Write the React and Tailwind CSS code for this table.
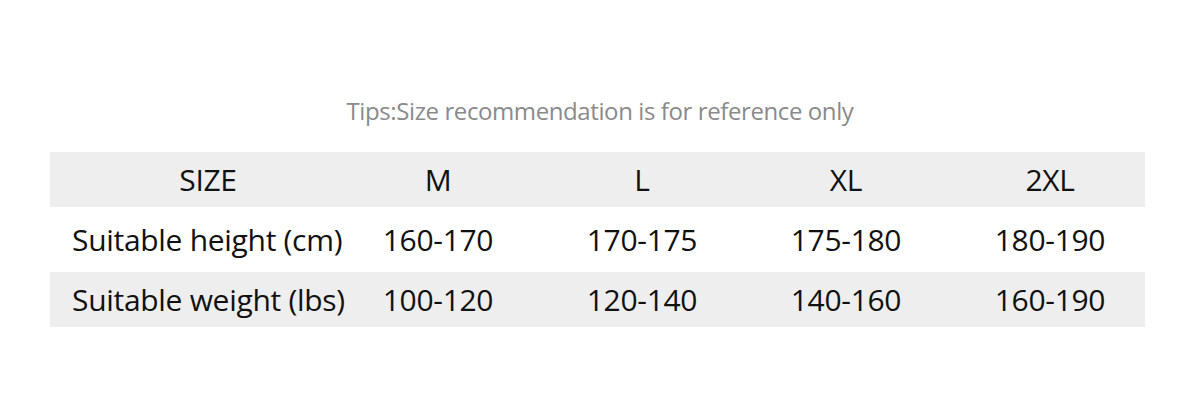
const rows = [
  { label: 'Suitable height (cm)', values: ['160-170', '170-175', '175-180', '180-190'], shade: false, h: 'h-[65px]' },
  { label: 'Suitable weight (lbs)', values: ['100-120', '120-140', '140-160', '160-190'], shade: true, h: 'h-[55px]' },
];

const sizes = ['M', 'L', 'XL', '2XL'];

export default function App() {
  return (
    <div className="w-[1200px] h-[416px] bg-white font-['Open_Sans',sans-serif] text-[#111111] flex flex-col items-center">
      <p className="mt-[95px] h-[32px] leading-[32px] text-[24px] text-[#8a8a8a] tracking-[-0.4px]">
        Tips:Size recommendation is for reference only
      </p>
      <div className="mt-[25px] w-[1095px] self-start ml-[50px]">
        <div className="flex h-[55px] items-center bg-[#eeeeee] text-[30px] tracking-[-0.3px]">
          <div className="w-[286px] shrink-0 pl-[30px] text-center">SIZE</div>
          {sizes.map((s) => (
            <div key={s} className="w-[204px] shrink-0 text-center">{s}</div>
          ))}
        </div>
        {rows.map((r) => (
          <div key={r.label} className={`flex items-center ${r.h} ${r.shade ? 'bg-[#eeeeee]' : 'bg-white'} text-[30px] tracking-[-0.3px]`}>
            <div className="w-[286px] shrink-0 pl-[22px] whitespace-nowrap">{r.label}</div>
            {r.values.map((v) => (
              <div key={v} className="w-[204px] shrink-0 text-center">{v}</div>
            ))}
          </div>
        ))}
      </div>
    </div>
  );
}
